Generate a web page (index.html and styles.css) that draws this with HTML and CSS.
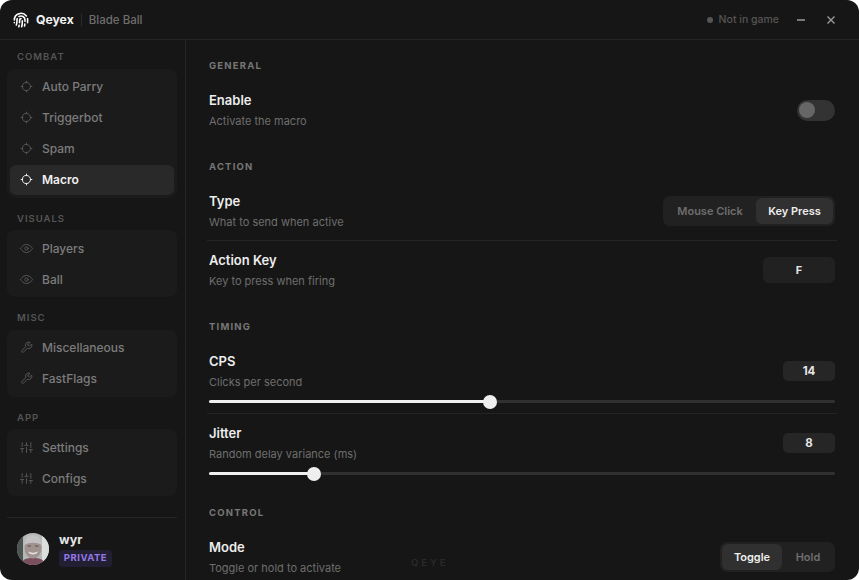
FILE: index.html
```html
<!DOCTYPE html>
<html lang="en">
<head>
    <meta charset="UTF-8">
    <title>Qeyex</title>
    <link rel="stylesheet" href="styles.css">
</head>
<body>
    <svg class="icon-defs" width="0" height="0">
        <symbol id="i-target" viewBox="0 0 24 24"><circle cx="12" cy="12" r="7.5"/><path d="M2 12h3M19 12h3M12 2v3M12 19v3"/></symbol>
        <symbol id="i-eye" viewBox="0 0 24 24"><path d="M1 12s4-7.500 11-7.500S23 12 23 12s-4 7.500-11 7.500S1 12 1 12z"/><circle cx="12" cy="12" r="3"/></symbol>
        <symbol id="i-wrench" viewBox="0 0 24 24"><path d="M14.7 6.3a1 1 0 0 0 0 1.4l1.6 1.6a1 1 0 0 0 1.4 0l3.77-3.77a6 6 0 0 1-7.94 7.94l-6.91 6.91a2.12 2.12 0 0 1-3-3l6.91-6.91a6 6 0 0 1 7.94-7.94l-3.76 3.76z"/></symbol>
        <symbol id="i-sliders" viewBox="0 0 24 24"><path d="M4 21v-7M4 10V3M12 21v-9M12 8V3M20 21v-5M20 12V3M1 14h6M9 8h6M17 16h6"/></symbol>
    </svg>

    <div class="window">
        <!-- Title bar -->
        <header class="titlebar">
            <svg class="logo" viewBox="0 0 24 24"><path d="M12 10a2 2 0 0 0-2 2c0 1.02-.1 2.51-.26 4"/><path d="M14 13.12c0 2.38 0 6.38-1 8.88"/><path d="M17.29 21.02c.12-.6.43-2.3.5-3.02"/><path d="M2 12a10 10 0 0 1 18-6"/><path d="M2 16h.01"/><path d="M21.8 16c.2-2 .131-5.354 0-6"/><path d="M5 19.5C5.5 18 6 15 6 12a6 6 0 0 1 .34-2"/><path d="M8.65 22c.21-.66.45-1.32.57-2"/><path d="M9 6.8a6 6 0 0 1 9 5.2v2"/></svg>
            <span class="brand">Qeyex</span>
            <span class="title-sep"></span>
            <span class="game-name">Blade Ball</span>
            <div class="title-right">
                <span class="status-dot"></span>
                <span class="status-text">Not in game</span>
                <svg class="win-btn minimize" viewBox="0 0 10 10"><path d="M1 5h8"/></svg>
                <svg class="win-btn close" viewBox="0 0 10 10"><path d="M1.5 1.5l7 7M8.5 1.5l-7 7"/></svg>
            </div>
        </header>

        <div class="body-wrap">
            <!-- Sidebar -->
            <aside class="sidebar">
                <div class="nav-label first">COMBAT</div>
                <div class="nav-group">
                    <a class="nav-item"><svg class="nav-icon"><use href="#i-target"/></svg>Auto Parry</a>
                    <a class="nav-item"><svg class="nav-icon"><use href="#i-target"/></svg>Triggerbot</a>
                    <a class="nav-item"><svg class="nav-icon"><use href="#i-target"/></svg>Spam</a>
                    <a class="nav-item active"><svg class="nav-icon"><use href="#i-target"/></svg>Macro</a>
                </div>
                <div class="nav-label">VISUALS</div>
                <div class="nav-group">
                    <a class="nav-item"><svg class="nav-icon"><use href="#i-eye"/></svg>Players</a>
                    <a class="nav-item"><svg class="nav-icon"><use href="#i-eye"/></svg>Ball</a>
                </div>
                <div class="nav-label">MISC</div>
                <div class="nav-group">
                    <a class="nav-item"><svg class="nav-icon"><use href="#i-wrench"/></svg>Miscellaneous</a>
                    <a class="nav-item"><svg class="nav-icon"><use href="#i-wrench"/></svg>FastFlags</a>
                </div>
                <div class="nav-label">APP</div>
                <div class="nav-group">
                    <a class="nav-item"><svg class="nav-icon"><use href="#i-sliders"/></svg>Settings</a>
                    <a class="nav-item"><svg class="nav-icon"><use href="#i-sliders"/></svg>Configs</a>
                </div>

                <div class="user-box">
                    <svg class="avatar" viewBox="0 0 32 32">
                        <rect width="32" height="32" fill="#b4b8b7"/>
                        <rect width="6" height="32" fill="#4c5350"/>
                        <rect x="25" width="7" height="32" fill="#dcdede"/>
                        <path d="M4 32c1-6 5-7 12-7s11 1 12 7z" fill="#7a4f5e"/>
                        <ellipse cx="16" cy="15" rx="8.500" ry="10.500" fill="#a0938f"/>
                        <path d="M7.500 12c0-7 4-10 8.500-10s8.500 3 8.500 10c-4-3-13-3-17 0z" fill="#c4c1c2"/>
                        <path d="M11 18.500c3 1.500 7 1.500 10 0-1 4-9 4-10 0z" fill="#e2dedc"/>
                        <path d="M10.500 13h3.500M18 13h3.500" stroke="#5a5150" stroke-width="1.200"/>
                    </svg>
                    <div class="user-info">
                        <div class="user-name">wyr</div>
                        <span class="user-badge">PRIVATE</span>
                    </div>
                </div>
            </aside>

            <!-- Main Content -->
            <main class="content">
                <section class="section first">
                    <div class="section-title">GENERAL</div>
                    <div class="row">
                        <div class="row-head">
                            <div>
                                <div class="row-name">Enable</div>
                                <div class="row-desc">Activate the macro</div>
                            </div>
                            <div class="toggle"><span class="toggle-knob"></span></div>
                        </div>
                    </div>
                </section>

                <section class="section">
                    <div class="section-title">ACTION</div>
                    <div class="row">
                        <div class="row-head">
                            <div>
                                <div class="row-name">Type</div>
                                <div class="row-desc">What to send when active</div>
                            </div>
                            <div class="segment">
                                <span class="seg-btn type-mouse">Mouse Click</span>
                                <span class="seg-btn type-key on">Key Press</span>
                            </div>
                        </div>
                    </div>
                    <div class="row">
                        <div class="row-head">
                            <div>
                                <div class="row-name">Action Key</div>
                                <div class="row-desc">Key to press when firing</div>
                            </div>
                            <div class="key-box">F</div>
                        </div>
                    </div>
                </section>

                <section class="section">
                    <div class="section-title">TIMING</div>
                    <div class="row">
                        <div class="row-head">
                            <div>
                                <div class="row-name">CPS</div>
                                <div class="row-desc">Clicks per second</div>
                            </div>
                            <div class="value-box">14</div>
                        </div>
                        <div class="slider"><div class="slider-fill" style="width: 44.9%"><span class="slider-knob"></span></div></div>
                    </div>
                    <div class="row">
                        <div class="row-head">
                            <div>
                                <div class="row-name">Jitter</div>
                                <div class="row-desc">Random delay variance (ms)</div>
                            </div>
                            <div class="value-box">8</div>
                        </div>
                        <div class="slider"><div class="slider-fill" style="width: 16.8%"><span class="slider-knob"></span></div></div>
                    </div>
                </section>

                <section class="section">
                    <div class="section-title">CONTROL</div>
                    <div class="row">
                        <div class="row-head">
                            <div>
                                <div class="row-name">Mode</div>
                                <div class="row-desc">Toggle or hold to activate</div>
                            </div>
                            <div class="segment">
                                <span class="seg-btn mode-toggle on">Toggle</span>
                                <span class="seg-btn mode-hold">Hold</span>
                            </div>
                        </div>
                    </div>
                </section>
            </main>
        </div>

        <div class="watermark">QEYE</div>
    </div>
</body>
</html>
```

FILE: styles.css
```css
/* General Styling */
html, body {
    margin: 0;
    padding: 0;
    height: 100%;
    background-color: #fff;
    overflow: hidden;
}

body {
    font-family: 'Inter', 'Liberation Sans', sans-serif;
}

.icon-defs {
    position: absolute;
}

.window {
    position: relative;
    display: flex;
    flex-direction: column;
    height: 580px;
    background-color: #161616;
    border-radius: 12px;
    overflow: hidden;
}

/* Title bar */
.titlebar {
    display: flex;
    align-items: center;
    flex: none;
    height: 39px;
    padding: 0 23px 0 13px;
    border-bottom: 1px solid #262626;
}

.logo {
    width: 16px;
    height: 16px;
    fill: none;
    stroke: #fff;
    stroke-width: 2.4;
    stroke-linecap: round;
    stroke-linejoin: round;
}

.brand {
    margin-left: 7px;
    font-size: 12.2px;
    font-weight: 700;
    color: #f2f2f2;
}

.title-sep {
    width: 1px;
    height: 12px;
    margin: 0 7px;
    background-color: #2c2c2c;
}

.game-name {
    font-size: 11.5px;
    font-weight: 500;
    color: #6e6e6e;
}

.title-right {
    display: flex;
    align-items: center;
    margin-left: auto;
}

.status-dot {
    width: 6px;
    height: 6px;
    margin-right: 6px;
    border-radius: 50%;
    background-color: #555;
}

.status-text {
    font-size: 10.5px;
    font-weight: 500;
    color: #555;
}

.win-btn {
    width: 10px;
    height: 10px;
    fill: none;
    stroke: #9a9a9a;
    stroke-width: 1.4;
}

.minimize {
    margin-left: 17px;
}

.close {
    margin-left: 20px;
}

.body-wrap {
    display: flex;
    flex: 1;
    min-height: 0;
}

/* Sidebar */
.sidebar {
    display: flex;
    flex-direction: column;
    flex: none;
    box-sizing: border-box;
    width: 186px;
    padding: 10px 8px 0 7px;
    border-right: 1px solid #262626;
}

.nav-label {
    height: 13px;
    margin: 14px 0 5.5px;
    padding-left: 10px;
    font-size: 9.5px;
    font-weight: 600;
    line-height: 13px;
    letter-spacing: 1px;
    color: #555;
}

.nav-label.first {
    margin-top: 0;
}

.nav-group {
    display: flex;
    flex-direction: column;
    gap: 1px;
    padding: 3px;
    border-radius: 8px;
    background-color: #1b1b1b;
}

.nav-item {
    display: flex;
    align-items: center;
    gap: 9px;
    height: 30px;
    padding-left: 10px;
    border-radius: 6px;
    font-size: 12px;
    font-weight: 500;
    color: #7c7c7c;
}

.nav-item.active {
    background-color: #292929;
    color: #f0f0f0;
    font-weight: 600;
}

.nav-icon {
    width: 13px;
    height: 13px;
    fill: none;
    stroke: #565656;
    stroke-width: 1.8;
    stroke-linecap: round;
    stroke-linejoin: round;
}

.nav-item.active .nav-icon {
    stroke: #f0f0f0;
}

.user-box {
    display: flex;
    align-items: flex-start;
    gap: 10px;
    margin-top: auto;
    padding: 14px 0 13px 10px;
    border-top: 1px solid #262626;
}

.avatar {
    width: 32px;
    height: 32px;
    margin-top: 1px;
    border-radius: 50%;
}

.user-name {
    margin-bottom: 2px;
    font-size: 12.5px;
    font-weight: 700;
    line-height: 16px;
    color: #e6e6e6;
}

.user-badge {
    display: block;
    width: 53px;
    height: 17px;
    border-radius: 4px;
    background-color: #231f33;
    font-size: 9.5px;
    font-weight: 700;
    line-height: 15px;
    letter-spacing: 0.5px;
    text-align: center;
    color: #9478e6;
}

/* Main Content */
.content {
    flex: 1;
    min-width: 0;
    padding: 18px 24px 0 23px;
}

.section {
    margin-top: 20px;
}

.section.first {
    margin-top: 0;
}

.section-title {
    height: 14px;
    margin-bottom: 9px;
    font-size: 9.5px;
    font-weight: 700;
    line-height: 16px;
    letter-spacing: 1.2px;
    color: #777;
}

.row {
    margin: 0 -2px;
    padding: 10px 2px;
}

.row + .row {
    border-top: 1px solid #242424;
}

.row-head {
    display: flex;
    align-items: center;
    justify-content: space-between;
}

.row-name {
    height: 18px;
    margin-bottom: 4px;
    font-size: 13px;
    font-weight: 600;
    line-height: 18px;
    color: #ededed;
}

.row-desc {
    height: 16px;
    font-size: 11px;
    line-height: 16px;
    color: #6e6e6e;
}

/* Controls */
.toggle {
    position: relative;
    width: 38px;
    height: 21px;
    border-radius: 11px;
    background-color: #333;
}

.toggle-knob {
    position: absolute;
    top: 2.5px;
    left: 2px;
    width: 16px;
    height: 16px;
    border-radius: 50%;
    background-color: #666;
}

.segment {
    display: flex;
    box-sizing: border-box;
    height: 30px;
    padding: 2px;
    border-radius: 7px;
    background-color: #212121;
}

.seg-btn {
    border-radius: 6px;
    font-size: 11px;
    font-weight: 600;
    line-height: 26px;
    text-align: center;
    color: #6e6e6e;
}

.seg-btn.on {
    background-color: #303030;
    color: #ededed;
}

.type-mouse {
    width: 90px;
    padding-right: 1px;
}

.type-key {
    width: 77px;
}

.mode-toggle {
    width: 60px;
}

.mode-hold {
    width: 50px;
    padding-left: 1px;
}

.key-box {
    width: 72px;
    height: 26px;
    border-radius: 6px;
    background-color: #212121;
    font-size: 11px;
    font-weight: 700;
    line-height: 26px;
    text-align: center;
    color: #e6e6e6;
}

.value-box {
    width: 52px;
    height: 20px;
    border-radius: 5px;
    background-color: #262626;
    font-size: 11.5px;
    font-weight: 700;
    line-height: 20px;
    text-align: center;
    color: #e6e6e6;
}

.slider {
    height: 3px;
    margin-top: 10px;
    border-radius: 2px;
    background-color: #303030;
}

.slider-fill {
    position: relative;
    height: 100%;
    border-radius: 2px;
    background-color: #f0f0f0;
}

.slider-knob {
    position: absolute;
    top: -5.5px;
    right: -7px;
    width: 14px;
    height: 14px;
    border-radius: 50%;
    background-color: #efefef;
}

.watermark {
    position: absolute;
    left: 411px;
    top: 556px;
    font-size: 9.5px;
    font-weight: 600;
    line-height: 13px;
    letter-spacing: 3px;
    color: #2a2a2a;
}
```
